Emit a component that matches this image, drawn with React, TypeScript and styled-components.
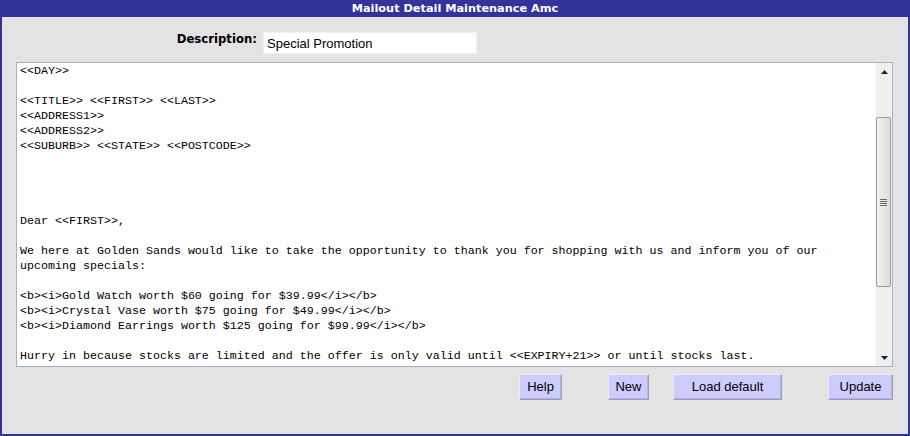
import React from 'react';
import styled, { createGlobalStyle } from 'styled-components';

const GlobalStyle = createGlobalStyle`
  html, body {
    margin: 0;
    padding: 0;
    background: #e3e3e3;
  }
`;

const Window = styled.div`
  width: 910px;
  height: 436px;
  box-sizing: border-box;
  border: 2px solid #333399;
  border-top: none;
  display: flex;
  flex-direction: column;
  background: #e3e3e3;
`;

const TitleBar = styled.div`
  height: 17px;
  margin: 0 -2px;
  background: #333399;
  color: #ffffff;
  font-family: 'DejaVu Sans', Verdana, sans-serif;
  font-weight: bold;
  font-size: 11.3px;
  line-height: 17px;
  text-align: center;
`;

const Body = styled.div`
  flex: 1;
  display: flex;
  flex-direction: column;
  padding: 15px 15px 0 14px;
`;

const DescRow = styled.div`
  display: grid;
  grid-template-columns: 247px 214px;
  align-items: start;
  height: 22px;
`;

const Label = styled.label`
  text-align: right;
  padding: 0 6px 0 0;
  font-family: 'DejaVu Sans', Verdana, sans-serif;
  font-weight: bold;
  font-size: 11.7px;
  color: #000;
`;

const TextInput = styled.input`
  box-sizing: border-box;
  height: 22px;
  width: 214px;
  margin: 0;
  padding: 1px 3px 0;
  border: 1px solid #f2f2f2;
  background: #ffffff;
  font-family: 'Liberation Sans', Arial, sans-serif;
  font-size: 13px;
  color: #000;
  outline: none;
`;

const Editor = styled.div`
  margin-top: 8px;
  height: 305px;
  box-sizing: border-box;
  border: 1px solid #a3b3c7;
  background: #ffffff;
  display: flex;
`;

const TextPane = styled.pre`
  flex: 1;
  margin: 0;
  padding: 1px 3px;
  overflow: hidden;
  font-family: 'Liberation Mono', 'Courier New', monospace;
  font-size: 11.67px;
  line-height: 15px;
  color: #000;
  white-space: pre;
`;

const ScrollBar = styled.div`
  width: 16px;
  background: #efefef;
  border-left: 1px solid #f7f7f7;
  display: flex;
  flex-direction: column;
`;

const Arrow = styled.div`
  height: 17px;
  display: flex;
  align-items: center;
  justify-content: center;
`;

const Track = styled.div<{ $offset: number }>`
  flex: 1;
  padding-top: ${(p) => p.$offset}px;
`;

const Thumb = styled.div<{ $size: number }>`
  height: ${(p) => p.$size}px;
  box-sizing: border-box;
  margin: 0 1px 0 0;
  border: 1px solid #9a9a9a;
  border-radius: 2px;
  background: linear-gradient(to right, #f2f2f2, #dcdcdc);
  display: flex;
  align-items: center;
  justify-content: center;
`;

const ButtonBar = styled.div`
  margin-top: 7px;
  display: flex;
  justify-content: flex-end;
`;

const Button = styled.button<{ $width: number; $gap: number }>`
  width: ${(p) => p.$width}px;
  height: 26px;
  margin-left: ${(p) => p.$gap}px;
  padding: 0;
  background: #ccccff;
  border: 1px solid;
  border-color: #ececff #9c9cbc #9c9cbc #ececff;
  box-shadow: inset -1px -1px 0 #b4b4dc;
  font-family: 'Liberation Sans', Arial, sans-serif;
  font-size: 13px;
  line-height: 16px;
  color: #000;
`;

const letter = `<<DAY>>

<<TITLE>> <<FIRST>> <<LAST>>
<<ADDRESS1>>
<<ADDRESS2>>
<<SUBURB>> <<STATE>> <<POSTCODE>>




Dear <<FIRST>>,

We here at Golden Sands would like to take the opportunity to thank you for shopping with us and inform you of our
upcoming specials:

<b><i>Gold Watch worth $60 going for $39.99</i></b>
<b><i>Crystal Vase worth $75 going for $49.99</i></b>
<b><i>Diamond Earrings worth $125 going for $99.99</i></b>

Hurry in because stocks are limited and the offer is only valid until <<EXPIRY+21>> or until stocks last.`;

const UpIcon = () => (
  <svg width="7" height="4" viewBox="0 0 7 4">
    <path d="M3.5 0 L7 4 L0 4 Z" fill="#222" />
  </svg>
);

const DownIcon = () => (
  <svg width="7" height="4" viewBox="0 0 7 4">
    <path d="M0 0 L7 0 L3.5 4 Z" fill="#222" />
  </svg>
);

const Grip = () => (
  <svg width="7" height="7" viewBox="0 0 7 7">
    <path d="M0 0.5H7M0 2.5H7M0 4.5H7M0 6.5H7" stroke="#6a6a6a" strokeWidth="1" />
  </svg>
);

const buttons = [
  { label: 'Help', width: 43, gap: 0 },
  { label: 'New', width: 41, gap: 46 },
  { label: 'Load default', width: 109, gap: 24 },
  { label: 'Update', width: 65, gap: 46 },
];

export default function App() {
  return (
    <>
      <GlobalStyle />
      <Window>
        <TitleBar>Mailout Detail Maintenance Amc</TitleBar>
        <Body>
          <DescRow>
            <Label htmlFor="desc">Description:</Label>
            <TextInput id="desc" defaultValue="Special Promotion" />
          </DescRow>
          <Editor>
            <TextPane>{letter}</TextPane>
            <ScrollBar>
              <Arrow>
                <UpIcon />
              </Arrow>
              <Track $offset={37}>
                <Thumb $size={170}>
                  <Grip />
                </Thumb>
              </Track>
              <Arrow>
                <DownIcon />
              </Arrow>
            </ScrollBar>
          </Editor>
          <ButtonBar>
            {buttons.map((b) => (
              <Button key={b.label} $width={b.width} $gap={b.gap}>
                {b.label}
              </Button>
            ))}
          </ButtonBar>
        </Body>
      </Window>
    </>
  );
}
